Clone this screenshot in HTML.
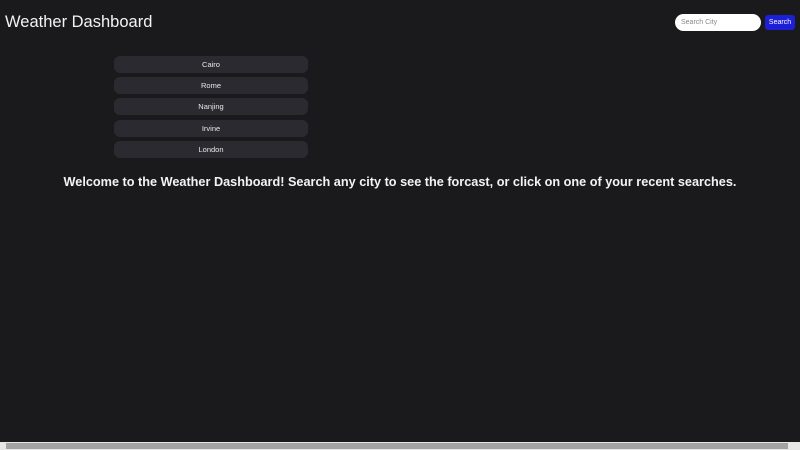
<!DOCTYPE html>
<html><head><style>
html,body{margin:0;padding:0;width:800px;height:450px;overflow:hidden;background:#1a191c;font-family:"Liberation Sans","DejaVu Sans",sans-serif;color:#f3f3f5;position:relative}
h1{position:absolute;left:5px;top:13px;margin:0;font-weight:normal;font-size:16.5px}
.search{position:absolute;left:675px;top:14px;width:86px;height:17px;border-radius:9px;background:#fff;box-sizing:border-box;padding-left:6px;font-size:7px;color:#888;line-height:17px}
.btn{position:absolute;left:765px;top:15px;width:30px;height:15px;border-radius:3px;background:#1c1fd6;color:#fff;font-size:7px;line-height:15px;text-align:center}
.city{position:absolute;left:114px;width:194px;height:17px;border-radius:6px;background:#2b2a30;font-size:7.5px;line-height:17px;text-align:center;color:#e8e8ec}
.welcome{position:absolute;left:0;width:800px;top:175px;text-align:center;font-weight:bold;font-size:12.7px}
.sb{position:absolute;left:0;top:442px;width:800px;height:8px;background:#e6e6e6}
.sb div{position:absolute;left:6px;top:1px;width:782px;height:6px;background:#a3a3a3}
</style></head><body>
<h1>Weather Dashboard</h1>
<div class="search">Search City</div>
<div class="btn">Search</div>
<div class="city" style="top:56px">Cairo</div>
<div class="city" style="top:77px">Rome</div>
<div class="city" style="top:98px">Nanjing</div>
<div class="city" style="top:120px">Irvine</div>
<div class="city" style="top:141px">London</div>
<div class="welcome">Welcome to the Weather Dashboard! Search any city to see the forcast, or click on one of your recent searches.</div>
<div class="sb"><div></div></div>
</body></html>
